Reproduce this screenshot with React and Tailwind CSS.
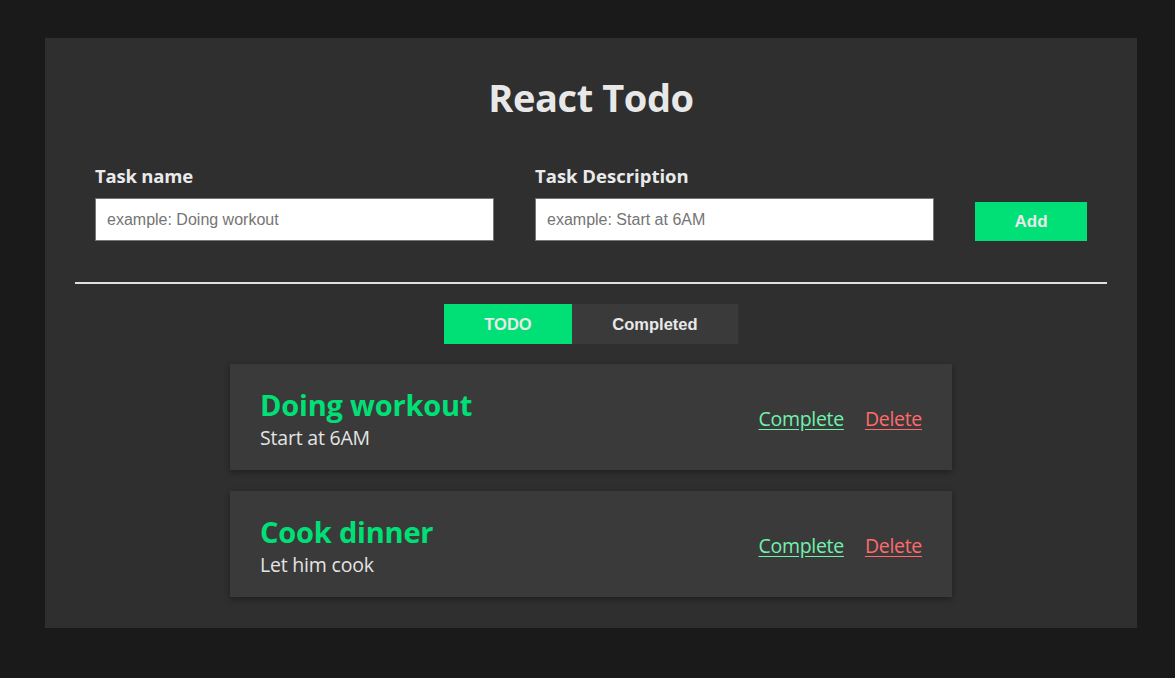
import { useState } from "react";

const todos = [
  { title: "Doing workout", description: "Start at 6AM" },
  { title: "Cook dinner", description: "Let him cook" },
];

export default function App() {
  const [tab, setTab] = useState("todo");

  return (
    <div className="min-h-[678px] bg-[#1a1a1a] pt-[38px] pb-[50px] pl-[45px] pr-[38px] font-['Open_Sans',sans-serif]">
      <div className="bg-[#2f2f2f] pt-[30px] pb-[31px] px-[30px]">
        <h1 className="text-center text-[38px] leading-[58px] font-bold text-[#e8e8e8] tracking-[-0.4px]">
          React Todo
        </h1>

        {/* input row */}
        <div className="flex items-end px-[20px] mt-[38px] pb-[41px] border-b-2 border-[#e0e0e0]">
          <div className="flex flex-col w-[399px] shrink-0">
            <label className="text-[18.5px] font-bold text-[#eaeaea] leading-[24px] mb-[10px] tracking-[-0.2px]">
              Task name
            </label>
            <input
              type="text"
              placeholder="example: Doing workout"
              className="h-[43px] bg-white border border-[#767676] px-[11px] text-[16px] font-['Liberation_Sans',sans-serif] text-black placeholder:text-[#757575] outline-none"
            />
          </div>
          <div className="flex flex-col w-[399px] shrink-0 ml-[41px]">
            <label className="text-[18.5px] font-bold text-[#eaeaea] leading-[24px] mb-[10px] tracking-[0px]">
              Task Description
            </label>
            <input
              type="text"
              placeholder="example: Start at 6AM"
              className="h-[43px] bg-white border border-[#767676] px-[11px] text-[16px] font-['Liberation_Sans',sans-serif] text-black placeholder:text-[#757575] outline-none"
            />
          </div>
          <button className="ml-[41px] w-[112px] h-[39px] shrink-0 bg-[#00e077] text-[#e8e8e8] text-[17px] font-bold font-['Liberation_Sans',sans-serif]">
            Add
          </button>
        </div>

        {/* tabs */}
        <div className="flex justify-center mt-[20px]">
          <button
            onClick={() => setTab("todo")}
            className={
              tab === "todo"
                ? "w-[128px] h-[40px] bg-[#00e077] text-[#e8e8e8] text-[16.5px] font-bold font-['Liberation_Sans',sans-serif]"
                : "w-[128px] h-[40px] bg-[#3a3a3a] text-[#e8e8e8] text-[16.5px] font-bold font-['Liberation_Sans',sans-serif]"
            }
          >
            TODO
          </button>
          <button
            onClick={() => setTab("completed")}
            className={
              tab === "completed"
                ? "w-[166px] h-[40px] bg-[#00e077] text-[#e8e8e8] text-[16.5px] font-bold font-['Liberation_Sans',sans-serif]"
                : "w-[166px] h-[40px] bg-[#3a3a3a] text-[#e8e8e8] text-[16.5px] font-bold font-['Liberation_Sans',sans-serif]"
            }
          >
            Completed
          </button>
        </div>

        {/* list */}
        <div className="w-[722px] mx-auto mt-[20px] flex flex-col gap-[21px]">
          {todos.map((t, i) => (
            <div
              key={i}
              className="h-[106px] bg-[#3a3a3a] flex items-center justify-between pl-[30px] pr-[30px] shadow-[0_2px_6px_rgba(0,0,0,0.35)]"
            >
              <div className="flex flex-col pt-[4px]">
                <h3 className="text-[29px] leading-[36px] font-bold text-[#00e077] tracking-[-0.2px]">{t.title}</h3>
                <p className="text-[19.5px] leading-[28px] mt-[1px] text-[#e4e4e4] tracking-[-0.2px]">{t.description}</p>
              </div>
              <div className="flex items-center gap-[21px] pt-[4px] text-[19.5px] tracking-[-0.3px]">
                <a href="#" className="text-[#6ff2ae] underline underline-offset-[3px]">Complete</a>
                <a href="#" className="text-[#ff6b6b] underline underline-offset-[3px]">Delete</a>
              </div>
            </div>
          ))}
        </div>
      </div>
    </div>
  );
}
